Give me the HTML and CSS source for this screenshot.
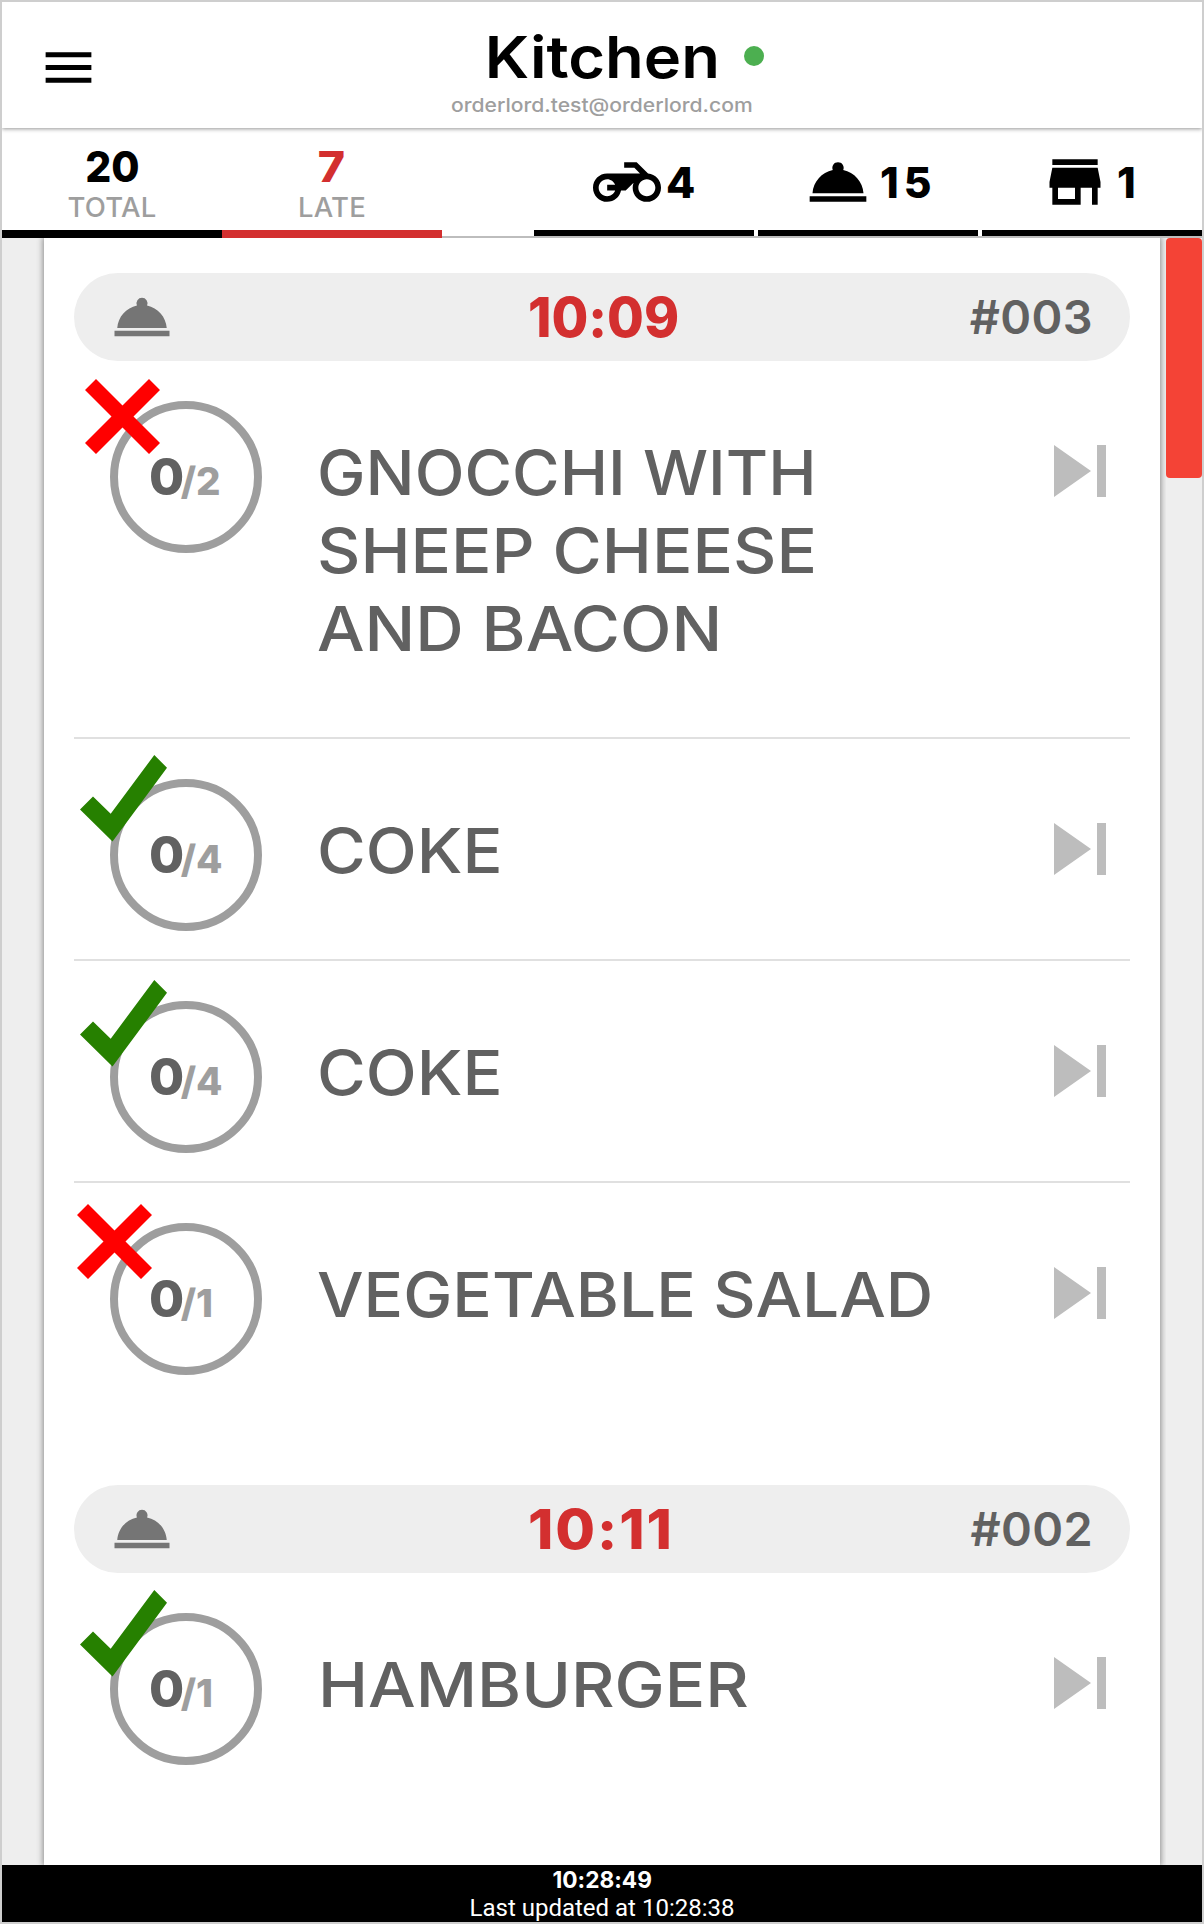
FILE: index.html
```html
<!DOCTYPE html>
<html lang="en">
<head>
<meta charset="utf-8">
<title>Kitchen</title>
<link rel="stylesheet" href="styles.css">
</head>
<body>
<svg class="defs" aria-hidden="true">
  <symbol id="cloche" viewBox="0 0 24 24"><path d="M2 17h20v2H2z M13.84 7.79A2.006 2.006 0 0 0 12 5a2.006 2.006 0 0 0-1.84 2.79C6.25 8.6 3.27 11.93 3 16h18c-.27-4.07-3.25-7.4-7.16-8.21z"/></symbol>
  <symbol id="skip" viewBox="0 0 52 52"><path d="M0 0l37 26L0 52zM43 0h9v52h-9z"/></symbol>
  <symbol id="cross" viewBox="0 0 75 75"><path d="M11 0L37.5 26.5 64 0 75 11 48.5 37.5 75 64 64 75 37.5 48.5 11 75 0 64 26.5 37.5 0 11z"/></symbol>
  <symbol id="check" viewBox="0 0 87 87"><path d="M74.3 0L87 12.8 32.5 86.6 0 54.5 13 41.5 30.7 58.7z"/></symbol>
</svg>
<div class="app">
  <header class="topbar">
    <svg class="menu" viewBox="0 0 24 24"><path d="M3 18h18v-2H3v2zm0-5h18v-2H3v2zm0-7v2h18V6H3z"/></svg>
    <div class="heading">
      <h1>Kitchen</h1>
      <p>orderlord.test@orderlord.com</p>
    </div>
    <i class="online"></i>
  </header>

  <nav class="stats">
    <div class="stat"><b>20</b><span>TOTAL</span></div>
    <div class="stat late"><b>7</b><span>LATE</span></div>
    <div class="types">
      <div class="type">
        <svg viewBox="0 0 24 24"><path d="M19.44 9.03L15.41 5H11v2h3.59l2 2H5c-2.8 0-5 2.2-5 5s2.2 5 5 5c2.46 0 4.45-1.69 4.9-4h1.65l2.77-2.77c-.21.54-.32 1.14-.32 1.77 0 2.8 2.2 5 5 5s5-2.2 5-5c0-2.65-1.97-4.77-4.56-4.97zM7.82 15C7.4 16.15 6.28 17 5 17c-1.63 0-3-1.37-3-3s1.37-3 3-3c1.28 0 2.4.85 2.82 2H5v2h2.82zM19 17c-1.66 0-3-1.34-3-3s1.34-3 3-3 3 1.34 3 3-1.34 3-3 3z"/></svg>
        <b>4</b>
      </div>
      <div class="type"><svg><use href="#cloche"/></svg><b class="wide">15</b></div>
      <div class="type">
        <svg viewBox="0 0 24 24"><path d="M20 4H4v2h16V4zm1 10v-2l-1-5H4l-1 5v2h1v6h10v-6h4v6h2v-6h1zm-9 4H6v-4h6v4z"/></svg>
        <b class="one">1</b>
      </div>
    </div>
  </nav>

  <main class="board">
    <div class="sheet">
      <section class="order">
        <div class="pill"><svg><use href="#cloche"/></svg><time>10:09</time><span>#003</span></div>
        <div class="item">
          <div class="count"><b>0</b>/2<svg class="no"><use href="#cross"/></svg></div>
          <div class="name"><span class="t-gnocchi">GNOCCHI WITH</span><span class="t-sheep">SHEEP CHEESE</span><span class="t-bacon">AND BACON</span></div>
          <svg class="skip"><use href="#skip"/></svg>
        </div>
        <div class="item">
          <div class="count"><b>0</b>/4<svg class="yes"><use href="#check"/></svg></div>
          <div class="name"><span class="t-coke">COKE</span></div>
          <svg class="skip"><use href="#skip"/></svg>
        </div>
        <div class="item">
          <div class="count"><b>0</b>/4<svg class="yes low"><use href="#check"/></svg></div>
          <div class="name"><span class="t-coke">COKE</span></div>
          <svg class="skip"><use href="#skip"/></svg>
        </div>
        <div class="item">
          <div class="count"><b>0</b>/1<svg class="no left"><use href="#cross"/></svg></div>
          <div class="name"><span class="t-salad">VEGETABLE SALAD</span></div>
          <svg class="skip"><use href="#skip"/></svg>
        </div>
      </section>
      <section class="order">
        <div class="pill"><svg><use href="#cloche"/></svg><time class="ones">10:11</time><span>#002</span></div>
        <div class="item">
          <div class="count"><b>0</b>/1<svg class="yes mid"><use href="#check"/></svg></div>
          <div class="name"><span class="t-burger">HAMBURGER</span></div>
          <svg class="skip"><use href="#skip"/></svg>
        </div>
      </section>
    </div>
    <div class="track"><div class="thumb"></div></div>
  </main>

  <footer class="status">
    <b>10:28:49</b>
    <span>Last updated at 10:28:38</span>
  </footer>
</div>
</body>
</html>
```
FILE: styles.css
```css
* { box-sizing: border-box; margin: 0; padding: 0; }
body { font-family: Inter, "Liberation Sans", sans-serif; font-feature-settings: "calt" 0; background: #fff; }
svg { display: block; fill: currentColor; }
.defs { display: none; }

.app {
  width: 1204px;
  height: 1924px;
  border: 2px solid #cecece;
  display: flex;
  flex-direction: column;
  overflow: hidden;
}

.topbar {
  flex: none;
  height: 126px;
  display: grid;
  grid-template-columns: 1fr auto 1fr;
  align-items: start;
  position: relative;
  z-index: 1;
  background: #fff;
  box-shadow: 0 1px 4px rgba(0, 0, 0, .42);
}
.menu { width: 61px; height: 61px; margin: 35px 0 0 36px; }
.heading { width: 302px; padding-top: 25px; display: flex; flex-direction: column; align-items: center; white-space: nowrap; }
.heading h1 { font-size: 57.8px; line-height: 60px; font-weight: 600; transform: scaleX(1.095); }
.heading p { margin-top: 6px; font-size: 19.3px; line-height: 24px; font-weight: 500; transform: scaleX(1.094); color: #9e9e9e; }
.online { width: 20px; height: 20px; margin: 44px 0 0 -9px; border-radius: 50%; background: #4caf50; }

.stats { flex: none; height: 110px; display: flex; background: linear-gradient(#bdbdbd, #bdbdbd) bottom / 100% 2px no-repeat #fff; }
.stats b { font-weight: 800; font-size: 42.6px; }
.stat {
  width: 220px;
  padding-top: 17px;
  display: flex;
  flex-direction: column;
  align-items: center;
  gap: 3px;
  border-bottom: 8px solid #000;
}
.stat b { line-height: 44px; transform: scaleX(.96); }
.stat.late b { transform: scaleX(1.09); }
.stat span { font-size: 27.5px; line-height: 30px; font-weight: 500; letter-spacing: .2px; color: #9e9e9e; }
.late { color: #d32f2f; border-color: #d32f2f; }
.types { margin-left: auto; height: 108px; display: flex; gap: 4px; }
.type { width: 220px; padding-top: 20px; display: flex; justify-content: center; align-items: flex-start; border-bottom: 6px solid #000; }
.type svg { width: 68px; height: 68px; }
.type b { width: 34px; padding-left: 5px; line-height: 69px; }
.type .wide { width: 60px; padding-left: 8px; letter-spacing: 5px; }
.type .one { padding-left: 8px; }

.board { flex: 1; min-height: 0; display: flex; background: #eee; overflow: hidden; }
.sheet { width: 1116px; margin-left: 42px; padding: 35px 30px 0; background: #fff; box-shadow: 0 0 6px 1px rgba(0, 0, 0, .42); }
.track { width: 36px; margin-left: auto; background: #eee; position: relative; }
.thumb { height: 240px; border-radius: 4px; background: #f44336; }

.order { margin-bottom: 82px; }
.pill {
  height: 88px;
  padding: 0 37px 0 35px;
  border-radius: 44px;
  background: #eee;
  display: grid;
  grid-template-columns: 419px 1fr auto;
  align-items: center;
}
.pill svg { width: 66px; height: 66px; color: #757575; }
.pill time { font-weight: 800; font-size: 54.3px; line-height: 88px; transform: scaleX(.98); transform-origin: left; color: #d32f2f; }
.pill .ones { transform: scaleX(1.06); letter-spacing: 1.8px; }
.pill span { font-size: 46.8px; line-height: 88px; font-weight: 600; letter-spacing: .4px; color: #616161; }

.item { display: grid; grid-template-columns: 152px 1fr 52px; align-items: start; padding: 0 24px 0 36px; border-bottom: 2px solid #e0e0e0; }
.item:last-child { border-bottom: 0; }
.count {
  position: relative;
  height: 152px;
  margin-top: 40px;
  padding-left: 31px;
  border: 8px solid #9e9e9e;
  border-radius: 50%;
  font-weight: 800;
  font-size: 38.5px;
  line-height: 136px;
  color: #9e9e9e;
  white-space: nowrap;
}
.count b { font-size: 50.9px; font-weight: 800; letter-spacing: -3.5px; color: #616161; }
.no { position: absolute; left: -33px; top: -30px; width: 75px; height: 75px; color: #f00; }
.no.left { left: -41px; top: -27px; }
.yes { position: absolute; left: -38px; top: -32px; width: 87px; height: 87px; color: #268000; }
.yes.low { top: -29px; }
.yes.mid { top: -31px; }
.name { padding: 73px 0 69px 55px; font-size: 61.9px; line-height: 78px; font-weight: 500; color: #616161; white-space: nowrap; }
.name span { display: block; transform-origin: left; }
.t-gnocchi { transform: scaleX(1.049); }
.t-sheep { transform: scaleX(1.086); }
.t-bacon { transform: scaleX(1.084); }
.t-coke { transform: scaleX(1.074); }
.t-salad { transform: scaleX(1.062); }
.t-burger { transform: translateX(1px) scaleX(1.086); }
.skip { width: 52px; height: 52px; margin-top: 84px; color: #bdbdbd; }

.status { flex: none; height: 57px; background: #000; color: #fff; display: flex; flex-direction: column; align-items: center; }
.status b { font-weight: 700; font-size: 23.4px; line-height: 29px; transform: scaleX(.97); }
.status span { font: 400 24px/29px Roboto, sans-serif; }
```
